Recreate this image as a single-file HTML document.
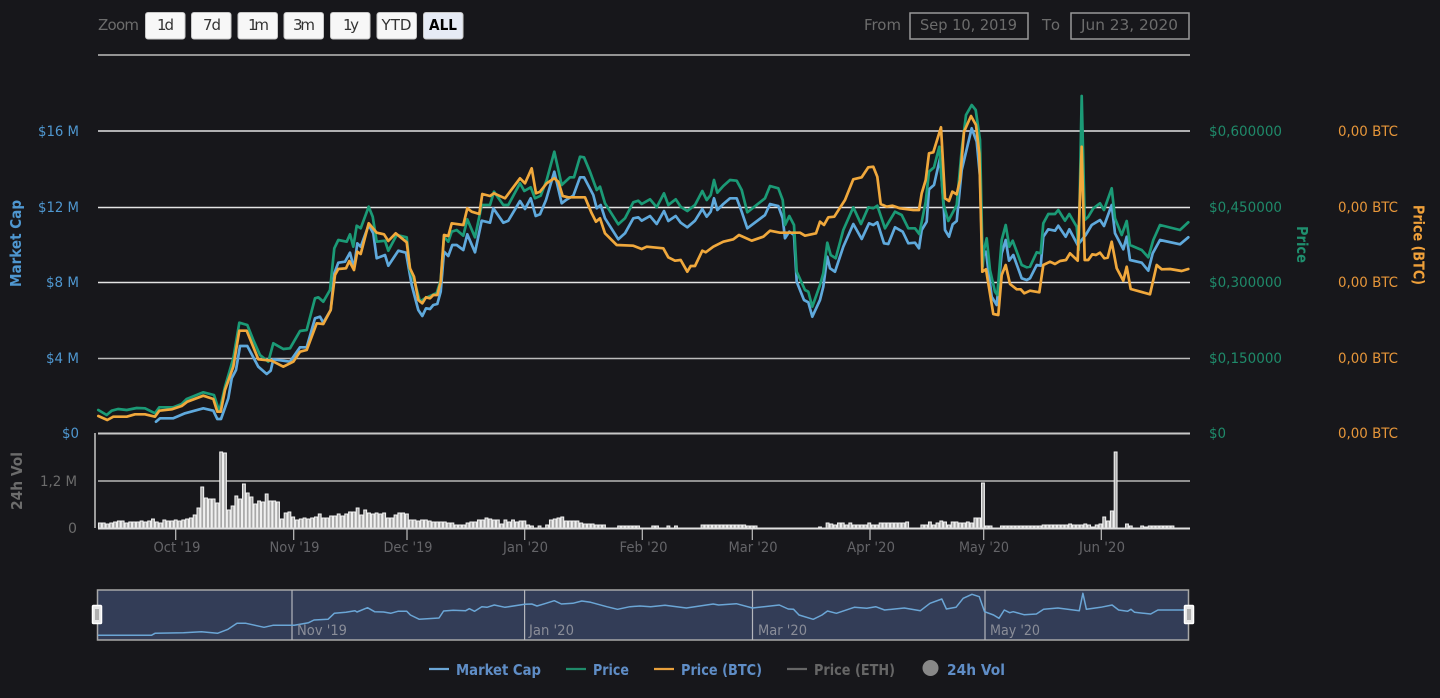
<!DOCTYPE html>
<html><head><meta charset="utf-8"><style>
html,body{margin:0;padding:0;background:#17171b;width:1440px;height:698px;overflow:hidden}
svg{display:block;filter:blur(.35px)}
text{font-family:"DejaVu Sans","Liberation Sans",sans-serif;font-size:14px}
.lb{fill:#4f97d0}.lg{fill:#1f8a6a}.lo{fill:#e6963a}
.ax{fill:#646468;font-size:14px}
.bt{fill:#333;font-size:15px}
.nv{fill:#8a8d98;font-size:14px}
.lg2{font-weight:bold;font-size:15px;fill:#5f8dc6}
.ln{fill:none;stroke-width:2.7;stroke-linejoin:round;stroke-linecap:round}
</style></head><body>
<svg width="1440" height="698" viewBox="0 0 1440 698" xmlns="http://www.w3.org/2000/svg">
<rect width="1440" height="698" fill="#17171b"/>

<text x="98" y="30" textLength="41" fill="#6c6c6c" style="font-size:15px">Zoom</text>
<g fill="#f7f7f7" stroke="#c8c8c8" stroke-width="1">
<rect x="145.500" y="12.500" width="39.500" height="26.500" rx="2.500"/>
<rect x="191.500" y="12.500" width="39.500" height="26.500" rx="2.500"/>
<rect x="238" y="12.500" width="39.500" height="26.500" rx="2.500"/>
<rect x="284" y="12.500" width="39.500" height="26.500" rx="2.500"/>
<rect x="330.500" y="12.500" width="39.500" height="26.500" rx="2.500"/>
<rect x="377" y="12.500" width="39.500" height="26.500" rx="2.500"/>
<rect x="423.500" y="12.500" width="39.500" height="26.500" rx="2.500" fill="#e6ebf5"/>
</g>
<text class="bt" x="157" y="30" textLength="17">1d</text>
<text class="bt" x="203" y="30" textLength="18">7d</text>
<text class="bt" x="248" y="30" textLength="21">1m</text>
<text class="bt" x="293" y="30" textLength="22">3m</text>
<text class="bt" x="343" y="30" textLength="16">1y</text>
<text class="bt" x="381.500" y="30" textLength="30" lengthAdjust="spacingAndGlyphs">YTD</text>
<text class="bt" x="429" y="30" textLength="28" lengthAdjust="spacingAndGlyphs" style="font-weight:bold;fill:#000">ALL</text>

<text x="864" y="30" textLength="37" fill="#6c6c6c" style="font-size:15px" lengthAdjust="spacingAndGlyphs">From</text>
<rect x="910" y="13" width="118" height="26" fill="none" stroke="#999" stroke-width="1.500"/>
<text x="920" y="30" textLength="97" fill="#6c6c6c" style="font-size:15px" lengthAdjust="spacingAndGlyphs">Sep 10, 2019</text>
<text x="1042" y="30" textLength="18" fill="#6c6c6c" style="font-size:15px">To</text>
<rect x="1071" y="13" width="118" height="26" fill="none" stroke="#999" stroke-width="1.500"/>
<text x="1081" y="30" textLength="97" fill="#6c6c6c" style="font-size:15px" lengthAdjust="spacingAndGlyphs">Jun 23, 2020</text>

<g stroke-width="1.500" fill="none">
<path d="M98 55H1190" stroke="#bdbdbd"/>
<path d="M98 131H1190" stroke="#e4e4e4"/>
<path d="M98 207.500H1190" stroke="#e4e4e4"/>
<path d="M98 282.500H1190" stroke="#e4e4e4"/>
<path d="M98 358.500H1190" stroke="#bcbcbc"/>
<path d="M98 433.500H1190" stroke="#c8c8c8" stroke-width="2"/>
<path d="M98 481H1190" stroke="#b8b8b8"/>
<path d="M95 433V528" stroke="#c8c8c8"/>
</g>

<text class="lb" x="38" y="136" textLength="41" lengthAdjust="spacingAndGlyphs">$16 M</text>
<text class="lb" x="38" y="212" textLength="41" lengthAdjust="spacingAndGlyphs">$12 M</text>
<text class="lb" x="46" y="287" textLength="33" lengthAdjust="spacingAndGlyphs">$8 M</text>
<text class="lb" x="46" y="363" textLength="33" lengthAdjust="spacingAndGlyphs">$4 M</text>
<text class="lb" x="62" y="438" textLength="17" lengthAdjust="spacingAndGlyphs">$0</text>
<text class="lg" x="1209" y="136" textLength="73" lengthAdjust="spacingAndGlyphs">$0,600000</text>
<text class="lg" x="1209" y="212" textLength="73" lengthAdjust="spacingAndGlyphs">$0,450000</text>
<text class="lg" x="1209" y="287" textLength="73" lengthAdjust="spacingAndGlyphs">$0,300000</text>
<text class="lg" x="1209" y="363" textLength="73" lengthAdjust="spacingAndGlyphs">$0,150000</text>
<text class="lg" x="1209" y="438" textLength="17" lengthAdjust="spacingAndGlyphs">$0</text>
<text class="lo" x="1338" y="136" textLength="60" lengthAdjust="spacingAndGlyphs">0,00 BTC</text>
<text class="lo" x="1338" y="212" textLength="60" lengthAdjust="spacingAndGlyphs">0,00 BTC</text>
<text class="lo" x="1338" y="287" textLength="60" lengthAdjust="spacingAndGlyphs">0,00 BTC</text>
<text class="lo" x="1338" y="363" textLength="60" lengthAdjust="spacingAndGlyphs">0,00 BTC</text>
<text class="lo" x="1338" y="438" textLength="60" lengthAdjust="spacingAndGlyphs">0,00 BTC</text>
<text x="40" y="486" textLength="37" fill="#6c6c6c" lengthAdjust="spacingAndGlyphs">1,2 M</text>
<text x="68" y="533" textLength="9" fill="#6c6c6c" lengthAdjust="spacingAndGlyphs">0</text>

<text transform="translate(21,287) rotate(-90)" textLength="87" lengthAdjust="spacingAndGlyphs" style="font-weight:bold;font-size:15px" fill="#4f97d0">Market Cap</text>
<text transform="translate(12,510) rotate(-90)" x="0" y="10" textLength="58" lengthAdjust="spacingAndGlyphs" style="font-weight:bold;font-size:15px" fill="#6c6c6c">24h Vol</text>
<text transform="translate(1297,226) rotate(90)" textLength="37" lengthAdjust="spacingAndGlyphs" style="font-weight:bold;font-size:15px" fill="#1f8f6e">Price</text>
<text transform="translate(1413.500,205) rotate(90)" textLength="80" lengthAdjust="spacingAndGlyphs" style="font-weight:bold;font-size:15px" fill="#efa03a">Price (BTC)</text>

<polyline class="ln" stroke="#5fa9dc" points="156,421.700 160,418.300 173.300,418.300 185,413.300 203.300,408.300 213.300,410.700 217.300,419 221,419 228.300,398.300 231.700,378.300 236,370 240,346 247.300,346 258.300,366.700 266.700,374 270.700,370.700 273.300,359.300 290,361.700 300,347.300 306.700,347.300 315,318.300 320,316.700 323.300,322.700 330.700,310 334.300,273.300 338.300,262.700 345,261.700 350,252.700 354,268.300 357.300,243.300 360.700,246.700 368.700,225 373.300,233.300 376.700,258.300 385,255 388.300,265.700 398.300,250.700 406,252.700 411.700,285 418.300,310 422.300,316 426,308.300 430,309 433.300,305 437.300,304 440.700,291.700 444,251.700 448.300,256 452.300,245 456.700,245 463.300,250 467.300,234.300 475,252.300 481.700,220.700 490,222.700 493.300,208.300 503.300,222.700 508.300,220.700 520,201 525,209 530.700,198.300 535.700,216 540,214.300 546,200 554.300,171.700 561.700,203.300 566,200 573.300,195.700 580,177.300 584,177.300 593.300,195 596.700,208.300 600.700,205 605,218.300 618.300,239.300 625,233.300 633.300,218.300 638.300,217.300 641.700,220.700 650,216 656.700,224 664,211 668.300,221 675.700,216 680.700,222.700 687.300,227.300 695,220.700 702.300,209 706.700,216.700 710.700,211.700 714,198.300 717.300,210 723.300,204 730,198.300 736.700,198.300 741.700,211.700 747.300,228.300 765,215 770,204 778.300,206 782.700,218.300 785,238.300 789.300,231.700 794,235 796.700,281.700 804,300 808.300,302.300 812.300,316.700 820,300 823.300,286.700 827.300,256.700 830,268.300 835,271.700 843.300,246.700 853.300,224 861.700,239 869,223.300 873.300,225 877.300,222.300 884,243.300 888.300,244 895,227.300 902.700,231.700 908.300,243.300 915,242.700 919,248.300 921.700,230 926.700,221.700 929,189.300 934,185 940,158.300 943.300,200 945,230 949,236.700 952.700,224.300 956.700,221 961.700,170 971.700,128.300 976.700,141.700 980,176.700 982.300,256.700 986,251.700 991.700,296.700 996.700,305 1001.700,253.300 1005.700,240 1009,260.700 1013.300,255 1021.700,278.300 1026.700,280 1030,278.300 1036.700,265 1040.700,265.700 1043.300,236.700 1048.300,229.300 1055,230.700 1058.300,225.700 1065.700,236.700 1069.300,229.300 1077.700,245 1085.700,235 1091.700,225 1100,220 1104,226 1111.700,205 1115,233.300 1123.300,249.300 1126.700,236.700 1130,260 1141.700,262.700 1148.300,270.700 1152.700,253.300 1160,240 1180,244.300 1188.300,237.300"/>
<polyline class="ln" stroke="#1b9a76" points="98.300,410 106.700,415 111.700,410.700 118,409 126.700,410 136.700,408 145,408.300 155,413.300 159.300,407.300 173.300,407.300 181.700,404 186.700,399 203.300,392.300 214,395 219.300,411.700 225,386.700 233.300,358.300 239.300,322.700 247.300,325 253.300,340 260,355 268.300,361.700 273.300,343.300 283.300,349 290,348.300 300,331 306.700,330 315,298.300 318.300,297.300 323.300,301.700 330,290 334.300,248.300 338.300,240 346.700,241.700 350,234.300 353.300,246.700 356.700,225.700 360.700,228.300 368.700,206.700 372.700,216.700 376.700,241.700 385,240.700 388.300,250.700 396.700,235 406.700,237.300 410,270 415,283 420,301.700 425,298.300 436.700,293 440.700,280 444,236.700 448.300,241.700 451.700,231.700 456.700,230 463.300,235.700 467.300,219.300 475,237.300 481.700,205 490,205 494,191.700 503.300,205 508.300,205 520,183.300 524.300,191 530.700,187.300 535,198.300 540.700,195.700 546.700,180 554.300,151.700 561.700,185 570,177.300 574,177.300 580,156.700 584,157.300 590,171.700 596.700,190 600,186.700 605,203.300 618.300,224.300 625,218.300 633.300,202.300 638.300,200.700 641.700,204 650,199.300 656.700,207.300 664,193.300 668.300,205 675.700,199.300 680.700,206.700 687.300,211 695,205 702.300,191 706.700,200 710.700,195 714,180 717.300,192.700 723.300,186 730,180 736.700,180.700 741.700,190 747.300,212.300 765,198.300 770,186 778.300,188.300 782.700,200 785,225 789.300,216 794,225 796.700,271.700 805,290 808.300,291.700 812.300,306.700 820,285 823.300,273.300 827.300,242.700 830.700,255 835.700,258.300 843.300,230 853.300,207.300 861,224 868.300,207.300 873.300,208.300 877.300,205.700 885,228.300 895,211.700 901.700,215 908.300,228.300 915,228.300 919.300,234 925.700,201.700 929,171.700 934,167.300 939.300,146.700 943.300,203.300 948.300,221 956.700,205 961.700,150 966,115 971.700,105 975.700,110 980,140 982.700,266.700 984,250 986.700,238.300 990,270 995,291.700 997.300,295 1001.700,240 1005.700,225 1009.300,246.700 1012.700,240.700 1021.700,265 1026.700,267.300 1030,266.700 1036.700,252.300 1040.700,253.300 1043.300,223.300 1048.300,214 1055,214 1058.300,210 1065,220.700 1069.300,214 1076.700,226.700 1078.700,250 1081.700,96 1084.700,220 1088.300,216.700 1093.300,208.300 1100,203.300 1104,210 1111.700,188.300 1115,218.300 1121.700,235 1126.700,221 1130,245 1141.700,250 1148.300,257.300 1153.300,240 1160,225 1180,230 1188.300,222.300"/>
<polyline class="ln" stroke="#f0a83c" points="98.300,416 107.300,420 113.300,416.700 126.700,416.700 135,414.300 145,414.300 155,416.700 159.300,410.700 171.700,409.300 181.700,406 187.300,401.700 203.300,395.700 213.300,399 217.300,411.700 220.700,411.700 225,390 233.300,366.700 239.300,330.700 246.700,330.700 258.300,359.300 271.700,360.700 283.300,366.700 293.300,361.700 300,351.700 306.700,350 316.700,323.300 323.300,324 330.700,310 335,275 338.300,269 346,268.300 349.300,261 354,270 357.300,251.700 360.700,254 368.700,223.300 376.700,232.700 384,234.300 388.300,241 395.700,233.300 406.700,242.300 410,268.300 414,276.700 418.300,300 422.300,303.300 426,297.300 430,298.300 433.300,295 437.300,295 440.700,281.700 444,235 448.300,236 451.700,223.300 463.300,225 467.300,208.300 471.700,211.700 479.300,214 482.300,194 490,196 494,193.300 505,198.300 520,178.300 525,183.300 531.700,168.300 536,193.300 540,191.700 546.700,183.300 554.300,178.300 558.300,181.700 562.700,196 568.300,197.300 585,197.300 591.700,213.300 596,221.700 600,218.300 605,233.300 616.700,245 633.300,245.700 641.700,249 646.700,246.700 663.300,248.300 668.300,257.300 675,260.700 680.700,260 687.300,271.700 690.700,266 695,266 702.300,250.700 705.700,252.300 713.300,246.700 723.300,241.700 733.300,239.300 739,235 751.700,240.700 763.300,236.700 770,230.700 780,232.700 800,232.700 805,235.700 816,233.300 820,221.700 824,225 828.300,217.300 834.300,216.700 840,207.700 845,200 853.300,179.300 861.700,177.300 868.300,167.300 873.300,166.700 877.300,176.700 880.700,204 886.700,206.700 892.300,205.700 900,208.300 913.300,210 919,210 921.700,193.300 925.700,180 929,153.300 933.300,152.300 941,127.300 945,198.300 949,201 952.300,191.700 956.700,194.300 960,180 964,131.700 971,116 976,125 979.300,153.300 982.300,271.700 986,269.300 993.300,314 998.300,315 1001.700,275 1005.700,265 1010,284 1016.700,289.300 1020.700,289.300 1024.300,293.300 1030,290.700 1039.300,292.300 1043.300,265 1050,261.700 1055,264 1060,261 1066,260 1070,253.300 1077.700,260.700 1081.700,146.700 1084.700,260 1088.300,260 1092.300,254.300 1096,255 1100,252.700 1104.300,258.300 1107.700,257.700 1111.700,241.700 1116.700,268.300 1123.300,280.700 1126.700,266.700 1130.700,289 1150,294.300 1156.700,265 1161.700,269.300 1170,269 1181.700,271 1188.300,269"/>

<path fill="#a8a8a8" stroke="#f0f0f0" stroke-width="1.100" d="M98.500 528v-5h2.800v5zm3.790 0v-5h2.800v5zm3.790 0v-4h2.800v4zm3.790 0v-5h2.800v5zm3.790 0v-6h2.800v6zm3.790 0v-7h2.800v7zm3.790 0v-7h2.800v7zm3.790 0v-5h2.800v5zm3.790 0v-6h2.800v6zm3.790 0v-6h2.800v6zm3.790 0v-6h2.800v6zm3.790 0v-7h2.800v7zm3.790 0v-6h2.800v6zm3.790 0v-7h2.800v7zm3.790 0v-9h2.800v9zm3.790 0v-6h2.800v6zm3.790 0v-5h2.800v5zm3.790 0v-8h2.800v8zm3.790 0v-7h2.800v7zm3.790 0v-7h2.800v7zm3.790 0v-8h2.800v8zm3.790 0v-7h2.800v7zm3.790 0v-8h2.800v8zm3.790 0v-9h2.800v9zm3.790 0v-10h2.800v10zm3.790 0v-13h2.800v13zm3.790 0v-20h2.800v20zm3.790 0v-41h2.800v41zm3.790 0v-30h2.800v30zm3.790 0v-29h2.800v29zm3.790 0v-29h2.800v29zm3.790 0v-25h2.800v25zm3.790 0v-76h2.800v76zm3.790 0v-75h2.800v75zm3.790 0v-18h2.800v18zm3.790 0v-22h2.800v22zm3.790 0v-32h2.800v32zm3.790 0v-29h2.800v29zm3.790 0v-44h2.800v44zm3.790 0v-35h2.800v35zm3.790 0v-31h2.800v31zm3.790 0v-24h2.800v24zm3.790 0v-27h2.800v27zm3.790 0v-26h2.800v26zm3.790 0v-34h2.800v34zm3.790 0v-27h2.800v27zm3.790 0v-27h2.800v27zm3.790 0v-26h2.800v26zm3.790 0v-9h2.800v9zm3.790 0v-15h2.800v15zm3.790 0v-16h2.800v16zm3.790 0v-11h2.800v11zm3.790 0v-8h2.800v8zm3.790 0v-9h2.800v9zm3.790 0v-10h2.800v10zm3.790 0v-9h2.800v9zm3.790 0v-10h2.800v10zm3.790 0v-11h2.800v11zm3.790 0v-14h2.800v14zm3.790 0v-10h2.800v10zm3.790 0v-10h2.800v10zm3.790 0v-12h2.800v12zm3.790 0v-12h2.800v12zm3.790 0v-14h2.800v14zm3.790 0v-12h2.800v12zm3.790 0v-14h2.800v14zm3.790 0v-16h2.800v16zm3.790 0v-16h2.800v16zm3.790 0v-20h2.800v20zm3.790 0v-13h2.800v13zm3.790 0v-18h2.800v18zm3.790 0v-15h2.800v15zm3.790 0v-14h2.800v14zm3.790 0v-15h2.800v15zm3.790 0v-14h2.800v14zm3.790 0v-15h2.800v15zm3.790 0v-10h2.800v10zm3.790 0v-10h2.800v10zm3.790 0v-13h2.800v13zm3.790 0v-15h2.800v15zm3.790 0v-15h2.800v15zm3.790 0v-14h2.800v14zm3.790 0v-8h2.800v8zm3.790 0v-8h2.800v8zm3.790 0v-7h2.800v7zm3.790 0v-8h2.800v8zm3.790 0v-8h2.800v8zm3.790 0v-7h2.800v7zm3.790 0v-6h2.800v6zm3.790 0v-6h2.800v6zm3.790 0v-6h2.800v6zm3.790 0v-6h2.800v6zm3.790 0v-5h2.800v5zm3.790 0v-5h2.800v5zm3.790 0v-3h2.800v3zm3.790 0v-3h2.800v3zm3.790 0v-3h2.800v3zm3.790 0v-5h2.800v5zm3.790 0v-6h2.800v6zm3.790 0v-6h2.800v6zm3.790 0v-8h2.800v8zm3.790 0v-8h2.800v8zm3.790 0v-10h2.800v10zm3.790 0v-9h2.800v9zm3.790 0v-8h2.800v8zm3.790 0v-8h2.800v8zm3.790 0v-4h2.800v4zm3.790 0v-8h2.800v8zm3.790 0v-6h2.800v6zm3.790 0v-8h2.800v8zm3.790 0v-6h2.800v6zm3.790 0v-7h2.800v7zm3.790 0v-7h2.800v7zm3.790 0v-3h2.800v3zm3.790 0v-2h2.800v2zm3.790 0m3.790 0v-2h2.800v2zm3.790 0m3.790 0v-3h2.800v3zm3.790 0v-8h2.800v8zm3.790 0v-9h2.800v9zm3.790 0v-10h2.800v10zm3.790 0v-11h2.800v11zm3.790 0v-7h2.800v7zm3.790 0v-7h2.800v7zm3.790 0v-7h2.800v7zm3.790 0v-7h2.800v7zm3.790 0v-5h2.800v5zm3.790 0v-4h2.800v4zm3.790 0v-4h2.800v4zm3.790 0v-4h2.800v4zm3.790 0v-3h2.800v3zm3.790 0v-3h2.800v3zm3.790 0v-3h2.800v3zm3.790 0m3.790 0m3.790 0m3.790 0v-2h2.800v2zm3.790 0v-2h2.800v2zm3.790 0v-2h2.800v2zm3.790 0v-2h2.800v2zm3.790 0v-2h2.800v2zm3.790 0v-2h2.800v2zm3.790 0m3.790 0m3.790 0m3.790 0v-2h2.800v2zm3.790 0v-2h2.800v2zm3.790 0m3.790 0m3.790 0v-2h2.800v2zm3.790 0m3.790 0v-2h2.800v2zm3.790 0m3.790 0m3.790 0m3.790 0m3.790 0m3.790 0m3.790 0v-3h2.800v3zm3.790 0v-3h2.800v3zm3.790 0v-3h2.800v3zm3.790 0v-3h2.800v3zm3.790 0v-3h2.800v3zm3.790 0v-3h2.800v3zm3.790 0v-3h2.800v3zm3.790 0v-3h2.800v3zm3.790 0v-3h2.800v3zm3.790 0v-3h2.800v3zm3.790 0v-3h2.800v3zm3.790 0v-3h2.800v3zm3.790 0v-2h2.800v2zm3.790 0v-2h2.800v2zm3.790 0v-2h2.800v2zm3.790 0m3.790 0m3.790 0m3.790 0m3.790 0m3.790 0m3.790 0m3.790 0m3.790 0m3.790 0m3.790 0m3.790 0m3.790 0m3.790 0m3.790 0m3.790 0m3.790 0v-1h2.800v1zm3.790 0m3.790 0v-5h2.800v5zm3.790 0v-4h2.800v4zm3.790 0v-3h2.800v3zm3.790 0v-5h2.800v5zm3.790 0v-5h2.800v5zm3.790 0v-3h2.800v3zm3.790 0v-5h2.800v5zm3.790 0v-3h2.800v3zm3.790 0v-3h2.800v3zm3.790 0v-3h2.800v3zm3.790 0v-3h2.800v3zm3.790 0v-5h2.800v5zm3.790 0v-3h2.800v3zm3.790 0v-3h2.800v3zm3.790 0v-5h2.800v5zm3.790 0v-5h2.800v5zm3.790 0v-5h2.800v5zm3.790 0v-5h2.800v5zm3.790 0v-5h2.800v5zm3.790 0v-5h2.800v5zm3.790 0v-5h2.800v5zm3.790 0v-6h2.800v6zm3.790 0m3.790 0m3.790 0m3.790 0v-3h2.800v3zm3.790 0v-3h2.800v3zm3.790 0v-6h2.800v6zm3.790 0v-3h2.800v3zm3.790 0v-5h2.800v5zm3.790 0v-7h2.800v7zm3.790 0v-6h2.800v6zm3.790 0v-3h2.800v3zm3.790 0v-6h2.800v6zm3.790 0v-6h2.800v6zm3.790 0v-5h2.800v5zm3.790 0v-5h2.800v5zm3.790 0v-6h2.800v6zm3.790 0v-5h2.800v5zm3.790 0v-10h2.800v10zm3.790 0v-10h2.800v10zm3.790 0v-45h2.800v45zm3.790 0v-2h2.800v2zm3.790 0v-2h2.800v2zm3.790 0m3.790 0m3.790 0v-2h2.800v2zm3.790 0v-2h2.800v2zm3.790 0v-2h2.800v2zm3.790 0v-2h2.800v2zm3.790 0v-2h2.800v2zm3.790 0v-2h2.800v2zm3.790 0v-2h2.800v2zm3.790 0v-2h2.800v2zm3.790 0v-2h2.800v2zm3.790 0v-2h2.800v2zm3.790 0v-2h2.800v2zm3.790 0v-3h2.800v3zm3.790 0v-3h2.800v3zm3.790 0v-3h2.800v3zm3.790 0v-3h2.800v3zm3.790 0v-3h2.800v3zm3.790 0v-3h2.800v3zm3.790 0v-3h2.800v3zm3.790 0v-4h2.800v4zm3.790 0v-3h2.800v3zm3.790 0v-3h2.800v3zm3.790 0v-3h2.800v3zm3.790 0v-4h2.800v4zm3.790 0v-3h2.800v3zm3.790 0v-1h2.800v1zm3.790 0v-3h2.800v3zm3.790 0v-4h2.800v4zm3.790 0v-11h2.800v11zm3.790 0v-7h2.800v7zm3.790 0v-17h2.800v17zm3.790 0v-76h2.800v76zm3.790 0m3.790 0m3.790 0v-4h2.800v4zm3.790 0v-2h2.800v2zm3.790 0m3.790 0m3.790 0v-2h2.800v2zm3.790 0v-1h2.800v1zm3.790 0v-2h2.800v2zm3.790 0v-2h2.800v2zm3.790 0v-2h2.800v2zm3.790 0v-2h2.800v2zm3.790 0v-2h2.800v2zm3.790 0v-2h2.800v2zm3.790 0v-2h2.800v2z"/>
<path d="M98 528.500H1190" stroke="#e0e0e0" stroke-width="2"/>
<path d="M175.700 529V540M293.700 529V540M407 529V540M524.700 529V540M642.300 529V540M752.300 529V540M870 529V540M983.700 529V540M1101.300 529V540" stroke="#c0c0c0" stroke-width="1.200"/>
<g>
<text class="ax" x="153.500" y="552" textLength="47" lengthAdjust="spacingAndGlyphs">Oct '19</text>
<text class="ax" x="269.500" y="552" textLength="50" lengthAdjust="spacingAndGlyphs">Nov '19</text>
<text class="ax" x="383.500" y="552" textLength="49" lengthAdjust="spacingAndGlyphs">Dec '19</text>
<text class="ax" x="503" y="552" textLength="45" lengthAdjust="spacingAndGlyphs">Jan '20</text>
<text class="ax" x="619.500" y="552" textLength="48" lengthAdjust="spacingAndGlyphs">Feb '20</text>
<text class="ax" x="728.500" y="552" textLength="49" lengthAdjust="spacingAndGlyphs">Mar '20</text>
<text class="ax" x="847" y="552" textLength="48" lengthAdjust="spacingAndGlyphs">Apr '20</text>
<text class="ax" x="959" y="552" textLength="50" lengthAdjust="spacingAndGlyphs">May '20</text>
<text class="ax" x="1079" y="552" textLength="46" lengthAdjust="spacingAndGlyphs">Jun '20</text>
</g>

<rect x="97.500" y="590" width="1091" height="50" fill="#333d57" stroke="#a8a8a8" stroke-width="1.500"/>
<path d="M292 590V640M524.600 590V640M752.500 590V640M985 590V640" stroke="#b4b6bc" stroke-width="1.200"/>
<polyline fill="none" stroke="#6ba6d6" stroke-width="1.500" stroke-linejoin="round" points="98,635.300 151.400,635.300 155,633.300 183.600,632.700 201.400,631.700 217.500,633.300 228,629.300 237,623.300 246,623.300 264,627.300 272.900,625.300 294.300,625.300 308.600,622.700 314,620 328,619.300 334.300,613.300 346,612.300 355,610.700 357,612 367.500,607.700 374.600,611.700 383.600,612 390.700,613.300 397.900,611.300 406.800,611.300 410.400,615 419.300,619.300 439,618 443.600,611 453.200,610.300 465.700,610.700 469.300,608.700 474.600,611.300 481.800,606.700 487,607.300 494.300,605 505,607.300 524.600,604.300 531.800,604 537,606 546,603.300 554.300,600.700 561.400,604 572.900,603.300 581.800,601 590.700,602.300 606.800,606.700 617.500,609.300 630,606.700 640,606 650.700,606.700 665,605.300 686.400,608 713.200,604 718.600,605 736.400,603.700 752.500,608 779.300,605 788.200,609 793.600,609.300 799,615 813.200,619.300 822,615 827.500,611 836.400,613.300 854.300,607.300 866.800,608.300 875.700,606.700 884.600,610 904.300,608 920.400,610.700 930,603.300 941.800,599 946.400,609 956,607.300 963.200,598.300 972,594.300 979.300,596.700 984.600,611.700 993.600,615 999,618.300 1004.300,610 1009.700,612.700 1013.200,611.700 1024,614.700 1036.400,614 1043.600,609.300 1057.900,608 1079.300,610.700 1082.900,593.300 1086.400,609.300 1100.700,607.300 1112.100,605 1118.600,610 1127.500,611.300 1131,609.300 1134.600,612.300 1150.700,614 1157.900,610 1184.600,610"/>
<text class="nv" x="297" y="635" textLength="50" lengthAdjust="spacingAndGlyphs">Nov '19</text>
<text class="nv" x="529" y="635" textLength="45" lengthAdjust="spacingAndGlyphs">Jan '20</text>
<text class="nv" x="758" y="635" textLength="49" lengthAdjust="spacingAndGlyphs">Mar '20</text>
<text class="nv" x="990" y="635" textLength="50" lengthAdjust="spacingAndGlyphs">May '20</text>

<g fill="#e8e8e8" stroke="#ffffff" stroke-width="1.500">
<rect x="92.500" y="605.500" width="9" height="18" rx="1"/>
<rect x="1184.500" y="605.500" width="9" height="18" rx="1"/>
</g>
<path d="M96 609V620M98 609V620M1188 609V620M1190 609V620" stroke="#777" stroke-width="1"/>

<g stroke-width="2.200">
<path d="M429 669H449" stroke="#6ba6d6"/>
<path d="M566 669H586" stroke="#1f8a6a"/>
<path d="M654 669H674" stroke="#e8a03c"/>
<path d="M787 669H807" stroke="#666"/>
</g>
<circle cx="930.500" cy="668" r="8" fill="#888"/>
<text class="lg2" x="456" y="675" textLength="85" lengthAdjust="spacingAndGlyphs">Market Cap</text>
<text class="lg2" x="593" y="675" textLength="36" lengthAdjust="spacingAndGlyphs">Price</text>
<text class="lg2" x="681" y="675" textLength="81" lengthAdjust="spacingAndGlyphs">Price (BTC)</text>
<text class="lg2" x="814" y="675" textLength="81" lengthAdjust="spacingAndGlyphs" style="fill:#666">Price (ETH)</text>
<text class="lg2" x="947" y="675" textLength="58" lengthAdjust="spacingAndGlyphs">24h Vol</text>
</svg>
</body></html>
